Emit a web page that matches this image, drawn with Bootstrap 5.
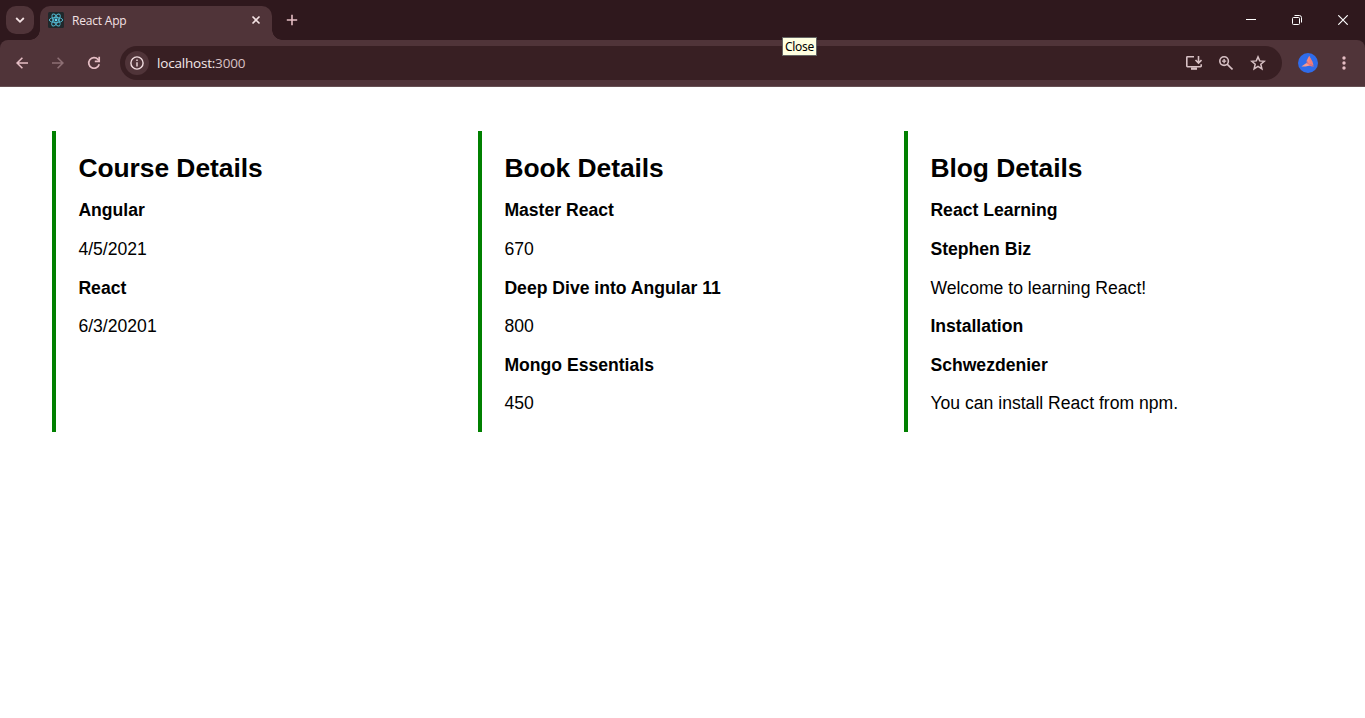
<!DOCTYPE html>
<html lang="en">
<head>
<meta charset="utf-8">
<meta name="viewport" content="width=device-width, initial-scale=1">
<title>React App</title>
<link href="https://cdn.jsdelivr.net/npm/bootstrap@5.3.0/dist/css/bootstrap.min.css" rel="stylesheet">
<style>
body{background:#fff;color:#000;font-family:"Liberation Sans",Arial,sans-serif;height:718px;overflow:hidden}
svg{display:block;flex:none}
.chrome{font-family:"Open Sans","Noto Sans",sans-serif;background:#2f181d}
.tabstrip{height:40px;padding-left:6px}
.tab-search{width:28px;height:28px;border-radius:10px;background:#503439;margin-top:6px}
.page-tab{width:232px;height:34px;margin:6px 0 0 6px;padding:0 10px 6px 8px;border-radius:10px 10px 0 0;background:#503439;color:#f4e2e4}
.page-tab::before,.page-tab::after{content:"";position:absolute;bottom:0;width:10px;height:10px}
.page-tab::before{left:-10px;background:radial-gradient(circle at 0 0,transparent 9.5px,#503439 10px)}
.page-tab::after{right:-10px;background:radial-gradient(circle at 100% 0,transparent 9.5px,#503439 10px)}
.tab-title{font-size:12px;line-height:16px;letter-spacing:-.2px;margin:1px 0 0 8px}
.new-tab{margin:14px 0 0 14px}
.win-btns{margin-right:-1px}
.win-btn{width:46px;height:40px}
.toolbar{height:47px;background:#503439;border-bottom:1px solid #665053;border-radius:8px 8px 0 0;padding-left:4px}
.tool{width:36px;height:36px;color:#e5bdc4}
.tool-off{color:#8d6f74}
.address{height:34px;margin-left:8px;width:1162px;border-radius:17px;background:#381f23;padding:0 8px 0 5px;color:#f4e8e9}
.info{width:24px;height:24px;border-radius:50%;background:#503439}
.url{font-size:13.5px;line-height:18px;letter-spacing:-.2px;margin-left:8px}
.url span{color:#d8c1c5}
.action{width:32px;height:32px;color:#d8c1c5}
.avatar{margin-left:16px}
.menu-dots{margin-left:24px}
.hint{left:782px;top:37px;width:35px;height:19px;background:#ffffe1;border:1px solid #646464;color:#000;font:12px/17px "Noto Sans",sans-serif;letter-spacing:-.3px;text-align:center}
.lists{padding:44px 0 0 52px}
.details{width:426px;height:301px;border-left:4px solid green;padding:21.5px 0 0 22.4px}
.details h1{font-size:26.4px;line-height:31px;font-weight:700;letter-spacing:-.04px;margin:0 0 16.9px}
.details h2,.details p{font-size:17.6px;line-height:20px;margin:0 0 18.6px}
.details h2{font-weight:700}
</style>
</head>
<body>
<header class="chrome position-relative">
  <div class="tabstrip d-flex">
    <div class="tab-search d-flex align-items-center justify-content-center">
      <svg width="10" height="10" fill="none" stroke="#f4e2e4" stroke-width="1.8"><path d="M1.2 3 5 6.8 8.8 3"/></svg>
    </div>
    <div class="page-tab position-relative d-flex align-items-center">
      <svg width="16" height="16" viewBox="0 0 16 16"><rect width="16" height="16" rx="1.5" fill="#20282b"/><g fill="none" stroke="#52b9d2" stroke-width=".95"><ellipse cx="8" cy="8" rx="6.7" ry="2.6"/><ellipse cx="8" cy="8" rx="6.7" ry="2.6" transform="rotate(60 8 8)"/><ellipse cx="8" cy="8" rx="6.7" ry="2.6" transform="rotate(120 8 8)"/></g><circle cx="8" cy="8" r="1.4" fill="#61dafb"/></svg>
      <span class="tab-title">React App</span>
      <svg class="ms-auto" width="12" height="12" fill="none" stroke="#f4e2e4" stroke-width="1.6"><path d="m2.5 2.5 7 7m0-7-7 7"/></svg>
    </div>
    <svg class="new-tab" width="12" height="12" fill="none" stroke="#e5bdc4" stroke-width="1.6"><path d="M6 .8v10.4M.8 6h10.4"/></svg>
    <div class="win-btns d-flex ms-auto">
      <div class="win-btn d-flex align-items-center justify-content-center"><svg width="10" height="10"><path d="M0 4.5h10" stroke="#fff"/></svg></div>
      <div class="win-btn d-flex align-items-center justify-content-center"><svg width="10" height="10" fill="none" stroke="#fff"><rect x=".5" y="2.5" width="7" height="7" rx="1"/><path d="M2.5.5h4.8a2.2 2.2 0 0 1 2.2 2.2v4.8"/></svg></div>
      <div class="win-btn d-flex align-items-center justify-content-center"><svg width="10" height="10" stroke="#fff" stroke-width="1.15"><path d="m.3.3 9.4 9.4m0-9.4L.3 9.7"/></svg></div>
    </div>
  </div>
  <div class="toolbar d-flex align-items-center">
    <div class="tool d-flex align-items-center justify-content-center"><svg width="12" height="12" fill="none" stroke="currentColor" stroke-width="1.6"><path d="M12 6H1.2M6.4.7 1.1 6l5.3 5.3"/></svg></div>
    <div class="tool tool-off d-flex align-items-center justify-content-center"><svg width="12" height="12" fill="none" stroke="currentColor" stroke-width="1.6"><path d="M0 6h10.8M5.6.7 10.9 6l-5.3 5.3"/></svg></div>
    <div class="tool d-flex align-items-center justify-content-center"><svg width="14" height="14" fill="none" stroke="currentColor" stroke-width="1.7"><path d="M12.2 8.2A5.3 5.3 0 1 1 11 3.4l1 1.1"/><path d="M12.2.8v4.6H7.8"/></svg></div>
    <div class="address d-flex align-items-center">
      <div class="info d-flex align-items-center justify-content-center"><svg width="14" height="14" fill="none" stroke="#f0dcdf" stroke-width="1.4"><circle cx="7" cy="7" r="6.1"/><path d="M7 6.2v4.2M7 3.6v1.5"/></svg></div>
      <span class="url">localhost:<span>3000</span></span>
      <div class="d-flex ms-auto">
        <div class="action d-flex align-items-center justify-content-center"><svg width="16" height="16" fill="none" stroke="currentColor" stroke-width="1.6"><path d="M8 1.8H1.4a.6.6 0 0 0-.6.6v8.7a.6.6 0 0 0 .6.6h13.2a.6.6 0 0 0 .6-.6V9.2M12.5 1v6.5M9.5 5l3 3 3-3"/><path d="M5 13.6h6" stroke-width="2.4"/></svg></div>
        <div class="action d-flex align-items-center justify-content-center"><svg width="14" height="14" fill="none" stroke="currentColor" stroke-width="1.6"><circle cx="5.1" cy="5.1" r="4.3"/><path d="m8.1 8.1 5.4 5.4"/><path d="M5.1 3v4.2M3 5.1h4.2" stroke-width="1.4"/></svg></div>
        <div class="action d-flex align-items-center justify-content-center"><svg width="16" height="16" fill="none" stroke="currentColor" stroke-width="1.5"><path d="m8 1.9 1.7 4 4.6.4-3.5 3 1.1 4.5L8 11.4l-3.9 2.4 1.1-4.5-3.5-3 4.6-.4z"/></svg></div>
      </div>
    </div>
    <svg class="avatar" width="20" height="20"><circle cx="10" cy="10" r="10" fill="#2f6ceb"/><path d="m11.2 2.8-2.6 5 3.4 4.4 1.6-3.4z" fill="#f8877f"/><path d="m11.2 2.8 3.2 5.6 1.2 4.2-4-1.6z" fill="#f07c78"/><path d="m8 8 4.4 3.4 4 1.8-2.6.4-4-1.6z" fill="#f47070"/><path d="m3.4 13.6 5-3.6 3.6 2.4-4.4 1.2z" fill="#f79a8e"/></svg>
    <svg class="menu-dots" width="4" height="14" fill="#e5bdc4"><circle cx="2" cy="2" r="1.7"/><circle cx="2" cy="7" r="1.7"/><circle cx="2" cy="12" r="1.7"/></svg>
  </div>
  <div class="hint position-absolute">Close</div>
</header>
<main class="lists d-flex">
  <section class="details flex-shrink-0">
    <h1>Course Details</h1>
    <h2>Angular</h2><p>4/5/2021</p>
    <h2>React</h2><p>6/3/20201</p>
  </section>
  <section class="details flex-shrink-0">
    <h1>Book Details</h1>
    <h2>Master React</h2><p>670</p>
    <h2>Deep Dive into Angular 11</h2><p>800</p>
    <h2>Mongo Essentials</h2><p>450</p>
  </section>
  <section class="details flex-shrink-0">
    <h1>Blog Details</h1>
    <h2>React Learning</h2><h2>Stephen Biz</h2><p>Welcome to learning React!</p>
    <h2>Installation</h2><h2>Schwezdenier</h2><p>You can install React from npm.</p>
  </section>
</main>
<script src="https://cdn.jsdelivr.net/npm/bootstrap@5.3.0/dist/js/bootstrap.bundle.min.js"></script>
</body>
</html>
